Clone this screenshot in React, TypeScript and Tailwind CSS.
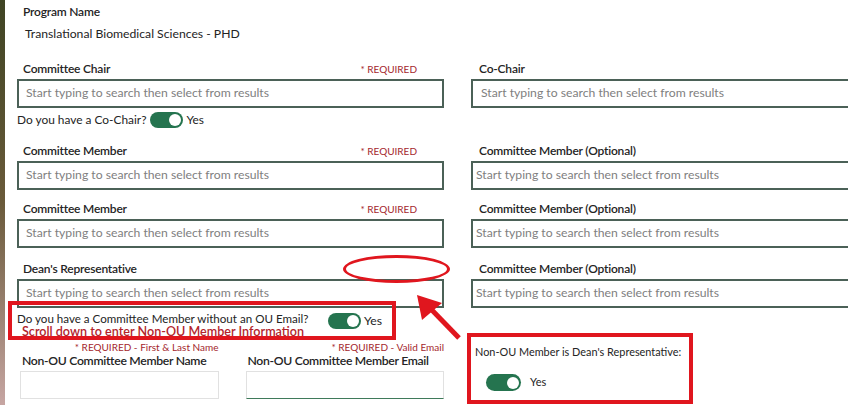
import React from "react";

const placeholder = "Start typing to search then select from results";

function Toggle({ className = "" }: { className?: string }) {
  return (
    <span className={`inline-flex h-[16px] w-[33px] shrink-0 items-center justify-end rounded-full bg-[#25744f] pr-[2px] ${className}`}>
      <span className="h-[12px] w-[12px] rounded-full bg-white" />
    </span>
  );
}

function Field({
  label,
  required,
  right,
  pad = "px-[7px]",
}: {
  label: string;
  required?: boolean;
  right?: boolean;
  pad?: string;
}) {
  return (
    <div>
      <div className={`flex h-[20px] items-center justify-between pr-[27px] ${right ? "pl-[8px]" : "pl-[6px]"}`}>
        <span className="text-[12px] font-semibold tracking-[-0.2px] text-[#242424]">{label}</span>
        {required && <span className="text-[10px] text-[#a4262c]">* REQUIRED</span>}
      </div>
      <div className={`flex h-[29px] items-center border-2 border-[#4b6157] bg-white ${pad} ${right ? "w-[420px]" : ""}`}>
        <input
          readOnly
          placeholder={placeholder}
          className="w-full bg-transparent text-[12.2px] text-[#242424] outline-none placeholder:text-[#808080]"
        />
      </div>
    </div>
  );
}

export default function App() {
  return (
    <div className="relative flex h-[405px] w-[848px] overflow-hidden bg-white font-['Lato',sans-serif] text-[#242424]">
      <div className="w-[5px] shrink-0 bg-gradient-to-b from-[#3f4424] via-[#6a5a3a] to-[#c7a6a3]" />

      <div className="grid flex-1 grid-cols-[427px_1fr] content-start gap-x-[27px] pl-[12px]">
        <div className="col-span-2 pl-[6px] pt-[3px]">
          <div className="flex h-[18px] items-center text-[12px] font-semibold tracking-[-0.2px]">Program Name</div>
          <div className="mt-[4px] flex h-[18px] items-center pl-[2px] text-[12.2px]">Translational Biomedical Sciences - PHD</div>
        </div>

        <div className="mt-[16px]">
          <Field label="Committee Chair" required />
        </div>
        <div className="mt-[16px]">
          <Field label="Co-Chair" right pad="px-[8px]" />
        </div>

        <div className="col-span-2 mt-[2px] flex h-[20px] items-center text-[11.9px]">
          <span>Do you have a Co-Chair?</span>
          <Toggle className="ml-[4px]" />
          <span className="ml-[3px]">Yes</span>
        </div>

        <div className="mt-[11px]">
          <Field label="Committee Member" required />
        </div>
        <div className="mt-[11px]">
          <Field label="Committee Member (Optional)" right pad="px-[3px]" />
        </div>

        <div className="mt-[9px]">
          <Field label="Committee Member" required />
        </div>
        <div className="mt-[9px]">
          <Field label="Committee Member (Optional)" right pad="px-[3px]" />
        </div>

        <div className="mt-[11px]">
          <Field label="Dean's Representative" />
        </div>
        <div className="mt-[11px]">
          <Field label="Committee Member (Optional)" right pad="px-[3px]" />
        </div>

        <div>
          <div className="mt-[4px] flex h-[13px] items-center whitespace-nowrap text-[11.6px] leading-none">
            <span className="w-[311px]">Do you have a Committee Member without an OU Email?</span>
            <Toggle className="mt-[5px]" />
            <span className="ml-[3px] mt-[5px] text-[12.2px]">Yes</span>
          </div>
          <div className="mt-[1px] flex h-[13px] items-center whitespace-nowrap pl-[5px] text-[12.6px] font-semibold leading-none text-[#b3232b]">
            Scroll down to enter Non-OU Member Information
          </div>
          <div className="mt-[2px] flex gap-[27px]">
            {[
              ["* REQUIRED - First & Last Name", "Non-OU Committee Member Name", "border-[#e1e1e1]"],
              ["* REQUIRED - Valid Email", "Non-OU Committee Member Email", "border-[#e1e1e1] border-b-[#3f7a5a]"],
            ].map(([req, label, border], i) => (
              <div key={label} className={`w-[200px] ${i === 0 ? "ml-[3px]" : ""}`}>
                <div className="flex h-[12px] items-center justify-end whitespace-nowrap text-[10px] text-[#a4262c]">{req}</div>
                <div className="flex h-[16px] items-center whitespace-nowrap pl-[2px] text-[12.2px] font-semibold tracking-[-0.3px]">{label}</div>
                <div className={`mt-[2px] h-[28px] border ${border} bg-white`} />
              </div>
            ))}
          </div>
        </div>

        <div className="pl-[4px]">
          <div className="mt-[37px] flex h-[14px] items-center whitespace-nowrap text-[10.9px]">Non-OU Member is Dean's Representative:</div>
          <div className="mt-[15px] flex items-center gap-[9px] pl-[11px]">
            <Toggle className="h-[17px] w-[35px]" />
            <span className="text-[11px]">Yes</span>
          </div>
        </div>
      </div>

      {/* annotations */}
      <div className="pointer-events-none absolute left-[8px] top-[301px] h-[39px] w-[388px] border-4 border-[#e0161e]" />
      <div className="pointer-events-none absolute left-[467px] top-[333px] h-[71px] w-[226px] border-4 border-[#e0161e]" />
      <div className="pointer-events-none absolute left-[343px] top-[255px] h-[28px] w-[107px] rounded-[50%] border-[3px] border-[#e0161e]" />
      <svg className="pointer-events-none absolute left-0 top-0" width="848" height="405" viewBox="0 0 848 405">
        <line x1="459" y1="338" x2="428" y2="306" stroke="#e0161e" strokeWidth="5" />
        <polygon points="417,295 442,303 422,320" fill="#e0161e" />
      </svg>
    </div>
  );
}
